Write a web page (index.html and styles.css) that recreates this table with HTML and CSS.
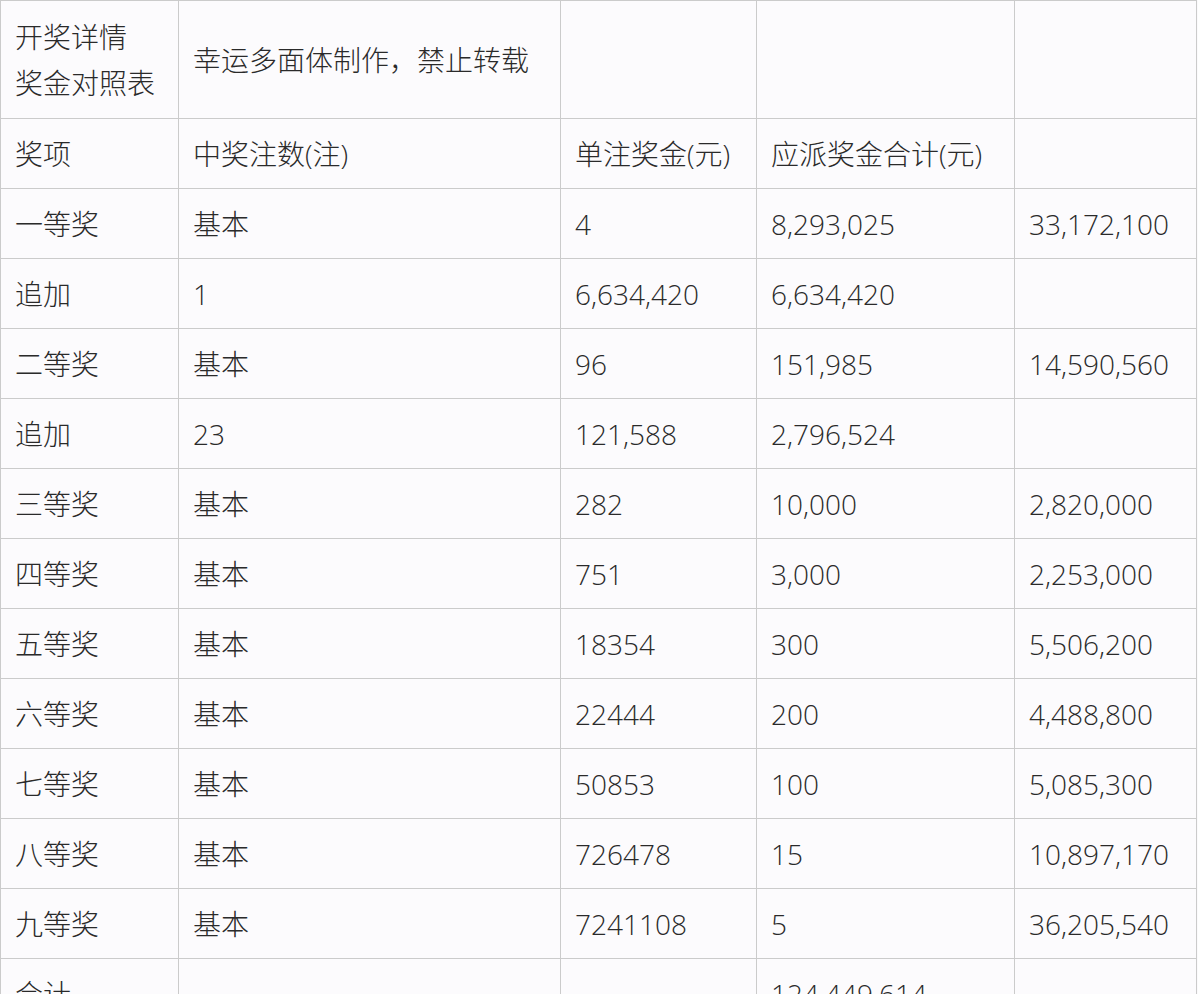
FILE: index.html
```html
<!DOCTYPE html>
<html lang="zh-CN">
<head>
<meta charset="utf-8">
<title>开奖详情</title>
<link rel="stylesheet" href="styles.css">
</head>
<body>
<table class="prize">
  <colgroup>
    <col class="c1"><col class="c2"><col class="c3"><col class="c4"><col class="c5">
  </colgroup>
  <tbody>
    <tr class="head"><td>开奖详情<br>奖金对照表</td><td>幸运多面体制作，禁止转载</td><td></td><td></td><td></td></tr>
    <tr><td>奖项</td><td>中奖注数(注)</td><td>单注奖金(元)</td><td>应派奖金合计(元)</td><td></td></tr>
    <tr><td>一等奖</td><td>基本</td><td>4</td><td>8,293,025</td><td>33,172,100</td></tr>
    <tr><td>追加</td><td>1</td><td>6,634,420</td><td>6,634,420</td><td></td></tr>
    <tr><td>二等奖</td><td>基本</td><td>96</td><td>151,985</td><td>14,590,560</td></tr>
    <tr><td>追加</td><td>23</td><td>121,588</td><td>2,796,524</td><td></td></tr>
    <tr><td>三等奖</td><td>基本</td><td>282</td><td>10,000</td><td>2,820,000</td></tr>
    <tr><td>四等奖</td><td>基本</td><td>751</td><td>3,000</td><td>2,253,000</td></tr>
    <tr><td>五等奖</td><td>基本</td><td>18354</td><td>300</td><td>5,506,200</td></tr>
    <tr><td>六等奖</td><td>基本</td><td>22444</td><td>200</td><td>4,488,800</td></tr>
    <tr><td>七等奖</td><td>基本</td><td>50853</td><td>100</td><td>5,085,300</td></tr>
    <tr><td>八等奖</td><td>基本</td><td>726478</td><td>15</td><td>10,897,170</td></tr>
    <tr><td>九等奖</td><td>基本</td><td>7241108</td><td>5</td><td>36,205,540</td></tr>
    <tr><td>合计</td><td></td><td></td><td>124,449,614</td><td></td></tr>
  </tbody>
</table>
</body>
</html>
```
FILE: styles.css
```css
html, body {
  margin: 0;
  padding: 0;
  background: #fbfafc;
}
body {
  font-family: "Open Sans", "Noto Sans CJK SC", sans-serif;
  color: #2a2a2a;
  font-size: 28px;
  font-weight: 300;
  overflow: hidden;
}
.prize {
  border-collapse: collapse;
  table-layout: fixed;
  width: 1196px;
  background: #fcfbfd;
}
.c1 { width: 178px; }
.c2 { width: 382px; }
.c3 { width: 196px; }
.c4 { width: 258px; }
.c5 { width: 182px; }
.prize td {
  border: 1px solid #cbcbcb;
  height: 69px;
  padding: 0 14px;
  vertical-align: middle;
  line-height: 46px;
  white-space: nowrap;
}
.prize tr.head td {
  height: 117px;
}
```
